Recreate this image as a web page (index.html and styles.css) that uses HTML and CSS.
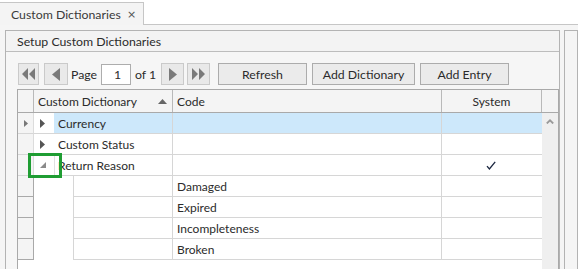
FILE: index.html
```html
<!DOCTYPE html>
<html>
<head>
<meta charset="utf-8">
<link rel="stylesheet" href="styles.css">
</head>
<body>
<div class="tabstrip">
  <div class="tab"><span class="tab-label">Custom Dictionaries</span><span class="tab-close">×</span></div>
  <div class="tabfill"></div>
</div>
<div class="content">
  <div class="panel main">
    <div class="panel-head">Setup Custom Dictionaries</div>
    <div class="panel-body">
      <div class="toolbar">
        <div class="pbtn first"><svg width="14" height="12" viewBox="0 0 14 12"><path d="M6 0v12L0 6z M13 0v12L7 6z" fill="#7a7a7a"/></svg></div>
        <div class="pbtn prev"><svg width="8" height="13" viewBox="0 0 8 13"><path d="M8 0v13L0 6.5z" fill="#7a7a7a"/></svg></div>
        <span class="ptext page">Page</span>
        <div class="pinput">1</div>
        <span class="ptext of">of 1</span>
        <div class="pbtn next"><svg width="8" height="13" viewBox="0 0 8 13"><path d="M0 0v13L8 6.5z" fill="#7a7a7a"/></svg></div>
        <div class="pbtn last"><svg width="14" height="12" viewBox="0 0 14 12"><path d="M0 0v12L6 6z M7 0v12L13 6z" fill="#7a7a7a"/></svg></div>
        <div class="btn refresh">Refresh</div>
        <div class="btn adddict">Add Dictionary</div>
        <div class="btn addentry">Add Entry</div>
      </div>
      <div class="grid">
        <div class="ghead">
          <div class="hc ind"></div>
          <div class="hc hdict"><span>Custom Dictionary</span><svg width="9" height="5" viewBox="0 0 9 5"><path d="M0 5L4.5 0L9 5z" fill="#666"/></svg></div>
          <div class="hc hcode">Code</div>
          <div class="hc hsys">System</div>
          <div class="hc hscroll"></div>
        </div>
        <div class="gbody">
          <div class="rows">
            <div class="row focused">
              <div class="ind"><svg width="4" height="7" viewBox="0 0 4 7"><path d="M0 0v7L4 3.5z" fill="#777"/></svg></div>
              <div class="exp"><svg width="5" height="9" viewBox="0 0 5 9"><path d="M0 0v9L5 4.5z" fill="#555"/></svg></div>
              <div class="name sel">Currency</div>
              <div class="code sel"></div>
              <div class="sys sel"></div>
            </div>
            <div class="row">
              <div class="ind"></div>
              <div class="exp"><svg width="5" height="9" viewBox="0 0 5 9"><path d="M0 0v9L5 4.5z" fill="#555"/></svg></div>
              <div class="name">Custom Status</div>
              <div class="code"></div>
              <div class="sys"></div>
            </div>
            <div class="row">
              <div class="ind"></div>
              <div class="exp"><svg width="6" height="6" viewBox="0 0 6 6"><path d="M6 0v6H0z" fill="#8a8a8a"/></svg></div>
              <div class="name open">Return Reason</div>
              <div class="code"></div>
              <div class="sys"><svg width="10" height="9" viewBox="0 0 10 9"><path d="M1 5.2L3.4 8L9.2 0.8" fill="none" stroke="#1c2740" stroke-width="1.3"/></svg></div>
            </div>
            <div class="crow">
              <div class="cind"></div><div class="cgap"></div>
              <div class="cname"></div><div class="ccode">Damaged</div><div class="csys"></div>
            </div>
            <div class="crow">
              <div class="cind"></div><div class="cgap"></div>
              <div class="cname"></div><div class="ccode">Expired</div><div class="csys"></div>
            </div>
            <div class="crow">
              <div class="cind"></div><div class="cgap"></div>
              <div class="cname"></div><div class="ccode">Incompleteness</div><div class="csys"></div>
            </div>
            <div class="crow">
              <div class="cind"></div><div class="cgap"></div>
              <div class="cname"></div><div class="ccode">Broken</div><div class="csys"></div>
            </div>
          </div>
          <div class="vscroll"><svg width="8" height="5" viewBox="0 0 8 5"><path d="M0.8 4.5L4 1.3L7.2 4.5" fill="none" stroke="#9a9a9a" stroke-width="1.8"/></svg></div>
        </div>
      </div>
    </div>
  </div>
  <div class="panel side"></div>
</div>
<div class="highlight"></div>
</body>
</html>
```

FILE: styles.css
```css
* { box-sizing: border-box; }
html, body { margin: 0; padding: 0; }
body {
  width: 578px;
  height: 269px;
  overflow: hidden;
  background: #f5f5f5;
  font-family: Lato, "Open Sans", sans-serif;
  font-size: 12px;
  color: #2b2b2b;
  position: relative;
}
.tabstrip {
  display: flex;
  align-items: flex-end;
  height: 25px;
  background: #fff;
}
.tab {
  width: 144px;
  height: 23px;
  background: #f4f4f4;
  border-top: 1px solid #c6c6c6;
  border-right: 1px solid #c6c6c6;
  display: flex;
  align-items: center;
  padding-left: 11px;
  color: #3a3a3a;
  font-size: 12.3px;
}
.tab-label { width: 106px; white-space: nowrap; }
.tab-close {
  margin-left: 10px;
  color: #555;
  font-family: "DejaVu Sans", sans-serif;
  font-size: 11px;
}
.tabfill {
  flex: 1;
  height: 1px;
  border-bottom: 1px solid #c6c6c6;
}
.content {
  display: flex;
  padding-top: 5px;
}
.panel {
  border: 1px solid #b3b3b3;
  height: 260px;
  background: #f5f5f5;
}
.main {
  margin-left: 5px;
  width: 566px;
}
.side {
  margin-left: 4px;
  width: 20px;
}
.panel-head {
  height: 21px;
  border-bottom: 1px solid #bdbdbd;
  background: #f3f3f3;
  padding-left: 11px;
  display: flex;
  align-items: center;
  font-size: 12.3px;
}
.panel-body {
  padding: 11px 0 0 11px;
  background: #f6f6f6;
  height: 240px;
}
.toolbar {
  display: flex;
  align-items: center;
  height: 22px;
  padding-left: 1px;
}
.pbtn {
  height: 22px;
  border: 1px solid #cacaca;
  background: #e9e9e9;
  display: flex;
  align-items: center;
  justify-content: center;
}
.first { width: 21px; }
.prev { width: 24px; margin-left: 5px; }
.next { width: 23px; }
.last { width: 23px; margin-left: 3px; }
.ptext { white-space: nowrap; font-size: 12.3px; }
.page { margin-left: 3px; width: 30px; }
.of { margin-left: 4px; width: 26px; }
.pinput {
  width: 30px;
  height: 21px;
  background: #fff;
  border: 1px solid #adadad;
  display: flex;
  align-items: center;
  padding-left: 12px;
  font-size: 12.3px;
}
.btn {
  height: 22px;
  border: 1px solid #acacac;
  background: #ebebeb;
  display: flex;
  align-items: center;
  justify-content: center;
  font-size: 12.3px;
}
.refresh { width: 89px; margin-left: 8px; }
.adddict { width: 103px; margin-left: 5px; }
.addentry { width: 89px; margin-left: 5px; }
.grid {
  margin-top: 4px;
  width: 542px;
  height: 200px;
  border: 1px solid #a9a9a9;
  border-bottom: none;
  background: #fff;
}
.ghead {
  display: flex;
  height: 23px;
  background: #f4f4f4;
  border-bottom: 1px solid #a9a9a9;
}
.hc {
  border-right: 1px solid #b9b9b9;
  display: flex;
  align-items: center;
}
.ghead .ind { width: 16px; }
.hdict { width: 139px; padding: 0 5px 0 4px; justify-content: space-between; }
.hcode { width: 269px; padding-left: 4px; }
.hsys { width: 100px; justify-content: center; }
.hscroll { width: 16px; border-right: none; }
.gbody { display: flex; }
.rows { width: 524px; }
.vscroll {
  width: 16px;
  height: 180px;
  background: #efefef;
  display: flex;
  justify-content: center;
  align-items: flex-start;
  padding-top: 6px;
}
.row, .crow {
  display: flex;
  height: 21px;
}
.row > div {
  border-bottom: 1px solid #d6d6d6;
  display: flex;
  align-items: center;
}
.row .ind {
  width: 16px;
  background: #f4f4f4;
  border-right: 1px solid #dcdcdc;
  justify-content: center;
}
.row .exp {
  width: 20px;
  justify-content: center;
  padding-right: 3px;
}
.row .name {
  width: 119px;
  padding-left: 4px;
  border-right: 1px solid #d6d6d6;
}
.row .name.open { border-left: 1px solid #e0e0e0; padding-left: 3px; }
.row .code { width: 269px; border-right: 1px solid #d6d6d6; padding-left: 4px; }
.row .sys { width: 100px; justify-content: center; padding-right: 3px; }
.sel { background: #cde8fb; }
.crow > div { display: flex; align-items: center; }
.cind {
  width: 16px;
  background: #f4f4f4;
  border-right: 1px solid #a9a9a9;
  border-bottom: 1px solid #a9a9a9;
}
.cgap { width: 39px; }
.cname {
  width: 100px;
  border-left: 1px solid #d6d6d6;
  border-right: 1px solid #d6d6d6;
  border-bottom: 1px solid #d6d6d6;
}
.ccode {
  width: 269px;
  padding-left: 4px;
  border-right: 1px solid #d6d6d6;
  border-bottom: 1px solid #d6d6d6;
}
.csys {
  width: 100px;
  border-bottom: 1px solid #d6d6d6;
}
.highlight {
  position: absolute;
  left: 28px;
  top: 153px;
  width: 34px;
  height: 25px;
  border: 3px solid #1f9d33;
}
```
